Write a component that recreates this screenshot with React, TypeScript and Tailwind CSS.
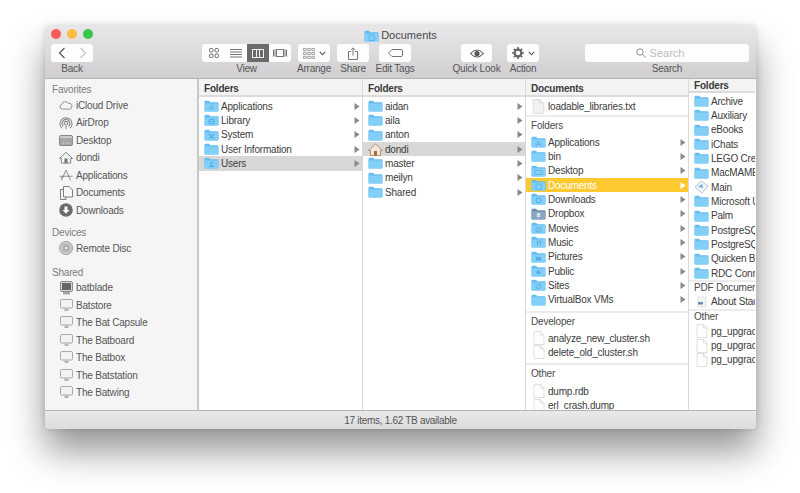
import React from "react"

type Entry = { name: string; icon?: string; arrow?: boolean; tone?: "grey" | "gold" }

const Folder = ({ glyph, dark }: { glyph?: string; dark?: boolean }) => (
  <svg width="15" height="12" viewBox="0 0 15 12" className="shrink-0">
    <path d="M0.5 2 Q0.5 0.8 1.6 0.8 H5 L6.4 2.2 H13.6 Q14.5 2.2 14.5 3.2 V10.6 Q14.5 11.5 13.6 11.5 H1.4 Q0.5 11.5 0.5 10.6 Z" fill={dark ? "#6f8fb0" : "#66bdf0"} />
    <path d="M0.5 3.6 H14.5 V10.6 Q14.5 11.5 13.6 11.5 H1.4 Q0.5 11.5 0.5 10.6 Z" fill={dark ? "#8aa6c2" : "#84cff8"} />
    {glyph === "a" && <path d="M5 10 L7.5 5 L10 10 M6 8.5 H9" stroke="#5fb6ec" strokeWidth="1" fill="none" />}
    {glyph === "lib" && <path d="M5 5.5 H10 V10 H5 Z M5 7.5 H10" stroke="#55aee6" strokeWidth="1" fill="none" />}
    {glyph === "x" && <path d="M5 5 L10 10 M10 5 L5 10" stroke="#55aee6" strokeWidth="1.2" />}
    {glyph === "user" && <path d="M5 10 Q5 8 7.5 8 Q10 8 10 10 Z M7.5 5 A1.3 1.3 0 1 0 7.5 7.6 A1.3 1.3 0 1 0 7.5 5" fill="#55aee6" />}
    {glyph === "desk" && <path d="M4 5.5 H11 V9.5 H4 Z" stroke="#5fb6ec" strokeWidth="1" fill="none" />}
    {glyph === "doc" && <path d="M5 5 H9 L10.5 6.5 V10.5 H5 Z" stroke="#5fb6ec" strokeWidth="1" fill="none" />}
    {glyph === "down" && <circle cx="7.5" cy="7.5" r="2.4" stroke="#55aee6" strokeWidth="1" fill="none" />}
    {glyph === "box" && <path d="M5 6 L7.5 4.8 L10 6 L7.5 7.4 Z M5 8 L7.5 6.8 L10 8 L7.5 9.6 Z" fill="#d9e4ee" />}
    {glyph === "film" && <path d="M5 5.5 H10 V10 H5 Z M6.5 5.5 V10 M8.5 5.5 V10" stroke="#5fb6ec" strokeWidth="0.8" fill="none" />}
    {glyph === "music" && <path d="M6.5 9.5 V5.5 L9.5 5 V9" stroke="#55aee6" strokeWidth="1" fill="none" />}
    {glyph === "pic" && <path d="M5 6 H10 V9.5 H5 Z" fill="#55aee6" />}
    {glyph === "pub" && <path d="M7.5 5 L10 7.5 L7.5 10 L5 7.5 Z" fill="#55aee6" />}
    {glyph === "site" && <path d="M5.5 9.5 L9.5 5.5 M7.5 5 A2.5 2.5 0 1 0 7.5 10 A2.5 2.5 0 1 0 7.5 5" stroke="#55aee6" strokeWidth="0.8" fill="none" />}
  </svg>
)

const FileIcon = ({ big }: { big?: boolean }) => (
  <svg width={big ? 13 : 12} height={big ? 15 : 14} viewBox="0 0 12 14" className="shrink-0">
    <path d="M1 0.5 H7.5 L11 4 V13.5 H1 Z" fill={big ? "#f1f1f1" : "#ffffff"} stroke="#d8d8d8" strokeWidth="0.8" />
    <path d="M7.5 0.5 V4 H11" fill="none" stroke="#d8d8d8" strokeWidth="0.8" />
  </svg>
)

const HomeIcon = () => (
  <svg width="15" height="13" viewBox="0 0 15 13" className="shrink-0">
    <path d="M7.5 1 L14.5 7.5 H12.5 V12.5 H2.5 V7.5 H0.5 Z" fill="#efe9df" stroke="#b07a4a" strokeWidth="0.8" />
    <rect x="6" y="8" width="3" height="4.5" fill="#a5683a" />
  </svg>
)

const ItemIcon = ({ kind }: { kind?: string }) => {
  if (kind === "file") return <FileIcon />
  if (kind === "txt") return <FileIcon big />
  if (kind === "home") return <HomeIcon />
  if (kind === "main")
    return (
      <svg width="15" height="14" viewBox="0 0 15 14" className="shrink-0">
        <path d="M7.5 1 L14 6 L8 13 L1 7 Z" fill="#f3f6fa" stroke="#9db4cf" strokeWidth="0.8" />
        <path d="M4 7 L8 4 L9 8 Z" fill="#6fa8dc" />
      </svg>
    )
  if (kind === "pdf")
    return (
      <svg width="14" height="13" viewBox="0 0 14 13" className="shrink-0">
        <rect x="3" y="2" width="8" height="10" fill="#f4f4f4" stroke="#d4d4d4" strokeWidth="0.6" />
        <rect x="3" y="7" width="5" height="2.5" fill="#6f8ab5" />
      </svg>
    )
  if (kind === "dropbox") return <Folder glyph="box" dark />
  return <Folder glyph={kind} />
}

const Arrow = ({ white }: { white?: boolean }) => (
  <svg width="6" height="7" viewBox="0 0 6 7" className="mr-[2px] shrink-0">
    <path d="M0.5 0 L5.5 3.5 L0.5 7 Z" fill={white ? "#ffffff" : "#8a8a8a"} />
  </svg>
)

const Row = ({ item }: { item: Entry }) => (
  <div
    className={`flex h-[14.33px] items-center pl-[5px] ${item.tone === "grey" ? "bg-[#d8d8d8]" : ""} ${item.tone === "gold" ? "bg-[#fdc92f] text-white" : "text-[#3c3c3c]"}`}
  >
    <div className="flex w-[15px] shrink-0 items-center justify-center">
      <ItemIcon kind={item.icon} />
    </div>
    <span className="ml-[2px] min-w-0 flex-1 overflow-hidden whitespace-nowrap">{item.name}</span>
    {item.arrow && <Arrow white={item.tone === "gold"} />}
  </div>
)

const ColHeader = ({ title }: { title: string }) => (
  <div className="flex h-[18px] items-center border-b-2 border-[#dcdcdc] bg-[#f3f3f3] pl-[5px] pt-[2px] font-bold text-[#3a3a3a]">
    {title}
  </div>
)

const col1: Entry[] = [
  { name: "Applications", icon: "a", arrow: true },
  { name: "Library", icon: "lib", arrow: true },
  { name: "System", icon: "x", arrow: true },
  { name: "User Information", arrow: true },
  { name: "Users", icon: "user", arrow: true, tone: "grey" },
]

const col2: Entry[] = [
  { name: "aidan", arrow: true },
  { name: "aila", arrow: true },
  { name: "anton", arrow: true },
  { name: "dondi", icon: "home", arrow: true, tone: "grey" },
  { name: "master", arrow: true },
  { name: "meilyn", arrow: true },
  { name: "Shared", arrow: true },
]

const col3: Entry[] = [
  { name: "Applications", icon: "a", arrow: true },
  { name: "bin", arrow: true },
  { name: "Desktop", icon: "desk", arrow: true },
  { name: "Documents", icon: "doc", arrow: true, tone: "gold" },
  { name: "Downloads", icon: "down", arrow: true },
  { name: "Dropbox", icon: "dropbox", arrow: true },
  { name: "Movies", icon: "film", arrow: true },
  { name: "Music", icon: "music", arrow: true },
  { name: "Pictures", icon: "pic", arrow: true },
  { name: "Public", icon: "pub", arrow: true },
  { name: "Sites", icon: "site", arrow: true },
  { name: "VirtualBox VMs", arrow: true },
]

const col4: Entry[] = [
  { name: "Archive" },
  { name: "Auxiliary" },
  { name: "eBooks" },
  { name: "iChats" },
  { name: "LEGO Creator" },
  { name: "MacMAME" },
  { name: "Main", icon: "main" },
  { name: "Microsoft User" },
  { name: "Palm" },
  { name: "PostgreSQL" },
  { name: "PostgreSQL 2" },
  { name: "Quicken Backup" },
  { name: "RDC Connections" },
]

const SideIcon = ({ kind }: { kind: string }) => {
  const c = "#7d7d7d"
  if (kind === "cloud")
    return (
      <svg width="14" height="10" viewBox="0 0 17 11">
        <path d="M4 10.5 A3 3 0 0 1 3.6 4.6 A4 4 0 0 1 11 3.4 A3.5 3.5 0 0 1 13 10.5 Z" fill="none" stroke={c} strokeWidth="1" />
      </svg>
    )
  if (kind === "airdrop")
    return (
      <svg width="14" height="14" viewBox="0 0 15 15" fill="none" stroke={c}>
        <path d="M3 13 A6.5 6.5 0 1 1 12 13" strokeWidth="1.1" />
        <path d="M4.6 11 A4.2 4.2 0 1 1 10.4 11" strokeWidth="1.1" />
        <path d="M6.2 9.2 A2 2 0 1 1 8.8 9.2" strokeWidth="1.1" />
        <path d="M7.5 8 V14" strokeWidth="1" />
      </svg>
    )
  if (kind === "desktop")
    return (
      <svg width="14" height="11" viewBox="0 0 15 12">
        <rect x="0.5" y="0.5" width="14" height="11" rx="1.5" fill="#a8a8a8" stroke={c} />
        <rect x="1" y="1.5" width="13" height="1.5" fill="#dddddd" />
        <path d="M4 9 H5 M7 9 H8 M10 9 H11" stroke="#eeeeee" />
      </svg>
    )
  if (kind === "home")
    return (
      <svg width="14" height="13" viewBox="0 0 15 13">
        <path d="M7.5 1 L14.5 7.5 H12.5 V12.5 H2.5 V7.5 H0.5 Z" fill="none" stroke={c} />
        <rect x="5.8" y="7.5" width="3.4" height="5" fill={c} />
      </svg>
    )
  if (kind === "apps")
    return (
      <svg width="15" height="14" viewBox="0 0 17 15" fill="none" stroke={c} strokeWidth="1">
        <path d="M3 14 L8.5 1.5 L14 14 M0.5 9 H16.5 M5.5 9 L2 11.5" />
      </svg>
    )
  if (kind === "docs")
    return (
      <svg width="13" height="14" viewBox="0 0 13 14" fill="#f6f6f6" stroke={c}>
        <path d="M0.5 3.5 H6 V13.5 H0.5 Z" />
        <path d="M3.5 0.5 H9 L12.5 4 V11 H3.5 Z" />
      </svg>
    )
  if (kind === "down")
    return (
      <svg width="14" height="14" viewBox="0 0 14 14">
        <circle cx="7" cy="7" r="6.8" fill="#6b6b6b" />
        <path d="M5.5 3.5 H8.5 V7 H10.5 L7 10.8 L3.5 7 H5.5 Z" fill="#f5f5f5" />
      </svg>
    )
  if (kind === "disc")
    return (
      <svg width="14" height="14" viewBox="0 0 14 14">
        <circle cx="7" cy="7" r="6.6" fill="#c9c9c9" stroke="#8c8c8c" strokeWidth="0.7" />
        <circle cx="7" cy="7" r="4" fill="#b5b5b5" />
        <circle cx="7" cy="7" r="1.6" fill="#f4f4f4" stroke="#8c8c8c" strokeWidth="0.5" />
      </svg>
    )
  if (kind === "server")
    return (
      <svg width="13" height="14" viewBox="0 0 13 14">
        <rect x="0.5" y="0.5" width="12" height="10" rx="1.5" fill="#d6d6d6" stroke="#8a8a8a" />
        <rect x="2" y="2" width="9" height="7" fill="#666666" />
        <rect x="3" y="11" width="7" height="2.5" fill="#a8a8a8" />
      </svg>
    )
  return (
    <svg width="13" height="13" viewBox="0 0 13 13">
      <rect x="0.5" y="0.5" width="12" height="8.5" rx="1.2" fill="#f2f2f2" stroke="#a8a8a8" />
      <rect x="4.5" y="9.5" width="4" height="2.5" fill="#b5b5b5" />
    </svg>
  )
}

const SideRow = ({ icon, name }: { icon: string; name: string }) => (
  <div className="flex h-[17.5px] items-center">
    <div className="flex w-[14px] shrink-0 items-center justify-center">
      <SideIcon kind={icon} />
    </div>
    <span className="ml-[3px] whitespace-nowrap">{name}</span>
  </div>
)

const SideTitle = ({ children, mt }: { children: string; mt: string }) => (
  <div className={`${mt} -ml-[7px] mb-[0.5px] h-[12px] leading-[12px] text-[#7d7d7d]`}>{children}</div>
)

const ToolButton = ({ children, w, selected }: { children?: React.ReactNode; w: string; selected?: boolean }) => (
  <div className={`flex h-[18px] ${w} items-center justify-center ${selected ? "bg-[#6b6b6b]" : ""}`}>{children}</div>
)

const ToolItem = ({ label, w, ml, children }: { label: string; w: string; ml: string; children: React.ReactNode }) => (
  <div className={`flex ${w} ${ml} shrink-0 flex-col items-center`}>
    <div className="flex h-[18px] w-full overflow-hidden rounded-[3px] bg-[#fdfdfd]">{children}</div>
    <div className="mt-[1px] whitespace-nowrap leading-[12px] text-[#555555]">{label}</div>
  </div>
)

const GridIcon = ({ c = "#666666" }: { c?: string }) => (
  <svg width="10" height="10" viewBox="0 0 10 10" fill="none" stroke={c}>
    <rect x="0.5" y="0.5" width="3.5" height="3.5" rx="1.2" />
    <rect x="6" y="0.5" width="3.5" height="3.5" rx="1.2" />
    <rect x="0.5" y="6" width="3.5" height="3.5" rx="1.2" />
    <rect x="6" y="6" width="3.5" height="3.5" rx="1.2" />
  </svg>
)

const Chevron = () => (
  <svg width="7" height="5" viewBox="0 0 7 5" fill="none" stroke="#555555" strokeWidth="1.1" className="ml-[4px]">
    <path d="M0.8 0.8 L3.5 3.8 L6.2 0.8" />
  </svg>
)

const Section = ({ children }: { children: React.ReactNode }) => (
  <div className="border-b-2 border-[#ececec]">{children}</div>
)

const SubTitle = ({ children, cls }: { children: string; cls: string }) => (
  <div className={`whitespace-nowrap pl-[5px] text-[#4a4a4a] ${cls}`}>{children}</div>
)

export default function App() {
  return (
    <div className="h-[493px] w-[800px] overflow-hidden bg-white pl-[45px] pt-[26px] text-[10px] tracking-[-0.2px] [font-family:'Liberation_Sans',Arial,sans-serif]">
      <div className="flex h-[403px] w-[711px] flex-col overflow-hidden rounded-[4px] shadow-[0_22px_36px_rgba(0,0,0,0.42),0_0_6px_rgba(0,0,0,0.15)]">
        {/* title bar + toolbar */}
        <div className="h-[53px] shrink-0 border-b border-[#b4b2b4] bg-gradient-to-b from-[#e9e7e9] to-[#d0ced0]">
          <div className="relative flex h-[18px] items-center justify-center pt-[1px]">
            <div className="absolute left-[6px] top-[3px] flex gap-[6px]">
              <div className="h-[10px] w-[10px] rounded-full bg-[#fc5b57]" />
              <div className="h-[10px] w-[10px] rounded-full bg-[#fdbc40]" />
              <div className="h-[10px] w-[10px] rounded-full bg-[#35c84a]" />
            </div>
            <Folder glyph="doc" />
            <span className="ml-[2px] text-[11px] tracking-normal text-[#4a4a4a]">Documents</span>
          </div>
          <div className="flex">
            <ToolItem label="Back" w="w-[42px]" ml="ml-[6px]">
              <ToolButton w="w-[21px]">
                <svg width="8" height="12" viewBox="0 0 8 12" fill="none" stroke="#555555" strokeWidth="1.2"><path d="M6.5 1 L1.5 6 L6.5 11" /></svg>
              </ToolButton>
              <ToolButton w="w-[21px]">
                <svg width="8" height="12" viewBox="0 0 8 12" fill="none" stroke="#c4c4c4" strokeWidth="1.2"><path d="M1.5 1 L6.5 6 L1.5 11" /></svg>
              </ToolButton>
            </ToolItem>
            <ToolItem label="View" w="w-[89px]" ml="ml-[109px]">
              <ToolButton w="w-[23px]"><GridIcon /></ToolButton>
              <ToolButton w="w-[22px]">
                <svg width="12" height="9" viewBox="0 0 12 9" stroke="#777777"><path d="M0 0.5 H12 M0 3 H12 M0 5.5 H12 M0 8 H12" /></svg>
              </ToolButton>
              <ToolButton w="w-[22px]" selected>
                <svg width="12" height="9" viewBox="0 0 12 9" fill="none" stroke="#f2f2f2"><rect x="0.5" y="0.5" width="11" height="8" /><path d="M4.5 0.5 V8.5 M7.5 0.5 V8.5" /></svg>
              </ToolButton>
              <ToolButton w="w-[22px]">
                <svg width="14" height="8" viewBox="0 0 14 8" fill="none" stroke="#777777"><rect x="3.5" y="0.5" width="7" height="7" /><path d="M0.5 0.5 V7.5 M2 0.5 V7.5 M12 0.5 V7.5 M13.5 0.5 V7.5" /></svg>
              </ToolButton>
            </ToolItem>
            <ToolItem label="Arrange" w="w-[32px]" ml="ml-[7px]">
              <ToolButton w="w-full">
                <svg width="12" height="11" viewBox="0 0 12 11" fill="none" stroke="#8f8f8f" strokeWidth="0.8">
                  <path d="M0.5 0.5 H3.2 V2.6 H0.5 Z M4.7 0.5 H7.3 V2.6 H4.7 Z M8.8 0.5 H11.5 V2.6 H8.8 Z" />
                  <path d="M0.5 4.4 H3.2 V6.5 H0.5 Z M4.7 4.4 H7.3 V6.5 H4.7 Z M8.8 4.4 H11.5 V6.5 H8.8 Z" />
                  <path d="M0.5 8.3 H3.2 V10.4 H0.5 Z M4.7 8.3 H7.3 V10.4 H4.7 Z M8.8 8.3 H11.5 V10.4 H8.8 Z" />
                </svg>
                <Chevron />
              </ToolButton>
            </ToolItem>
            <ToolItem label="Share" w="w-[32px]" ml="ml-[7px]">
              <ToolButton w="w-full">
                <svg width="10" height="13" viewBox="0 0 10 13" fill="none" stroke="#777777"><path d="M3 4.5 H0.5 V12.5 H9.5 V4.5 H7 M5 8.5 V1 M3 2.8 L5 0.8 L7 2.8" /></svg>
              </ToolButton>
            </ToolItem>
            <ToolItem label="Edit Tags" w="w-[32px]" ml="ml-[10px]">
              <ToolButton w="w-full">
                <svg width="15" height="8" viewBox="0 0 15 8" fill="none" stroke="#777777"><path d="M4 0.5 H13 Q14.5 0.5 14.5 2 V6 Q14.5 7.5 13 7.5 H4 L0.5 4 Z" /></svg>
              </ToolButton>
            </ToolItem>
            <ToolItem label="Quick Look" w="w-[31px]" ml="ml-[50px]">
              <ToolButton w="w-full">
                <svg width="14" height="9" viewBox="0 0 14 9"><path d="M0.5 4.5 Q7 -2.5 13.5 4.5 Q7 11.5 0.5 4.5 Z" fill="none" stroke="#555555" strokeWidth="1.1" /><circle cx="7" cy="4.5" r="2.6" fill="#555555" /></svg>
              </ToolButton>
            </ToolItem>
            <ToolItem label="Action" w="w-[32px]" ml="ml-[15px]">
              <ToolButton w="w-full">
                <svg width="12" height="12" viewBox="0 0 12 12"><circle cx="6" cy="6" r="3.4" fill="none" stroke="#666666" strokeWidth="2.2" /><path d="M6 0 V12 M0 6 H12 M1.8 1.8 L10.2 10.2 M10.2 1.8 L1.8 10.2" stroke="#666666" strokeWidth="1.6" strokeDasharray="2.2 7.6" /></svg>
                <Chevron />
              </ToolButton>
            </ToolItem>
            <ToolItem label="Search" w="w-[164px]" ml="ml-[46px]">
              <div className="flex h-[18px] w-full items-center justify-center pr-[14px] text-[11px] tracking-normal text-[#bdbdbd]">
                <svg width="10" height="10" viewBox="0 0 10 10" fill="none" stroke="#8a8a8a" strokeWidth="1"><circle cx="4" cy="4" r="3.2" /><path d="M6.4 6.4 L9.5 9.5" /></svg>
                <span className="ml-[4px]">Search</span>
              </div>
            </ToolItem>
          </div>
        </div>

        <div className="flex min-h-0 flex-1">
          {/* sidebar */}
          <div className="w-[154px] shrink-0 overflow-hidden border-r-2 border-[#c8c8c8] bg-[#f5f5f5] pl-[14px] text-[#555555]">
            <SideTitle mt="mt-[5px]">Favorites</SideTitle>
            <SideRow icon="cloud" name="iCloud Drive" />
            <SideRow icon="airdrop" name="AirDrop" />
            <SideRow icon="desktop" name="Desktop" />
            <SideRow icon="home" name="dondi" />
            <SideRow icon="apps" name="Applications" />
            <SideRow icon="docs" name="Documents" />
            <SideRow icon="down" name="Downloads" />
            <SideTitle mt="mt-[8px]">Devices</SideTitle>
            <SideRow icon="disc" name="Remote Disc" />
            <SideTitle mt="mt-[9.5px]">Shared</SideTitle>
            <SideRow icon="server" name="batblade" />
            <SideRow icon="screen" name="Batstore" />
            <SideRow icon="screen" name="The Bat Capsule" />
            <SideRow icon="screen" name="The Batboard" />
            <SideRow icon="screen" name="The Batbox" />
            <SideRow icon="screen" name="The Batstation" />
            <SideRow icon="screen" name="The Batwing" />
          </div>

          {/* columns */}
          <div className="w-[164px] shrink-0 border-r border-[#d9d9d9] bg-white">
            <ColHeader title="Folders" />
            <div className="pt-[2px]">
              {col1.map((item) => <Row key={item.name} item={item} />)}
            </div>
          </div>
          <div className="w-[163px] shrink-0 border-r border-[#d9d9d9] bg-white">
            <ColHeader title="Folders" />
            <div className="pt-[2px]">
              {col2.map((item) => <Row key={item.name} item={item} />)}
            </div>
          </div>
          <div className="w-[163px] shrink-0 overflow-hidden border-r border-[#d9d9d9] bg-white">
            <ColHeader title="Documents" />
            <Section>
              <div className="flex h-[18px] items-center pl-[5px] text-[#3c3c3c]">
                <div className="flex w-[15px] justify-center"><FileIcon big /></div>
                <span className="ml-[2px]">loadable_libraries.txt</span>
              </div>
            </Section>
            <Section>
              <SubTitle cls="pt-[3px] pb-[3px] leading-[12px]">Folders</SubTitle>
              <div className="pb-[4px]">
                {col3.map((item) => <Row key={item.name} item={item} />)}
              </div>
            </Section>
            <Section>
              <SubTitle cls="pt-[3px] pb-[3px] leading-[12px]">Developer</SubTitle>
              <div className="pb-[3.5px]">
                <Row item={{ name: "analyze_new_cluster.sh", icon: "file" }} />
                <Row item={{ name: "delete_old_cluster.sh", icon: "file" }} />
              </div>
            </Section>
            <SubTitle cls="pt-[3px] pb-[4px] leading-[12px]">Other</SubTitle>
            <Row item={{ name: "dump.rdb", icon: "file" }} />
            <Row item={{ name: "erl_crash.dump", icon: "file" }} />
          </div>
          <div className="w-[66px] shrink-0 overflow-hidden bg-white">
            <div className="flex h-[14px] items-center border-b-2 border-[#dcdcdc] bg-[#f3f3f3] pl-[5px] pt-[1px] font-bold text-[#3a3a3a]">Folders</div>
            <div className="border-b-2 border-[#ececec] pt-[1px]">
              {col4.map((item) => <Row key={item.name} item={item} />)}
            </div>
            <div className="border-b-2 border-[#ececec]">
              <SubTitle cls="leading-[12px]">PDF Documents</SubTitle>
              <Row item={{ name: "About Stacks.pdf", icon: "pdf" }} />
            </div>
            <SubTitle cls="leading-[11px]">Other</SubTitle>
            <div className="pt-[2.5px]">
              <Row item={{ name: "pg_upgrade_internal.log", icon: "file" }} />
              <Row item={{ name: "pg_upgrade_server.log", icon: "file" }} />
              <Row item={{ name: "pg_upgrade_utility.log", icon: "file" }} />
            </div>
          </div>
        </div>

        {/* status bar */}
        <div className="flex h-[19px] shrink-0 items-center justify-center border-t border-[#b4b2b4] bg-gradient-to-b from-[#e9e9e9] to-[#dcdcdc] tracking-[-0.3px] text-[#555555]">
          17 items, 1.62 TB available
        </div>
      </div>
    </div>
  )
}
